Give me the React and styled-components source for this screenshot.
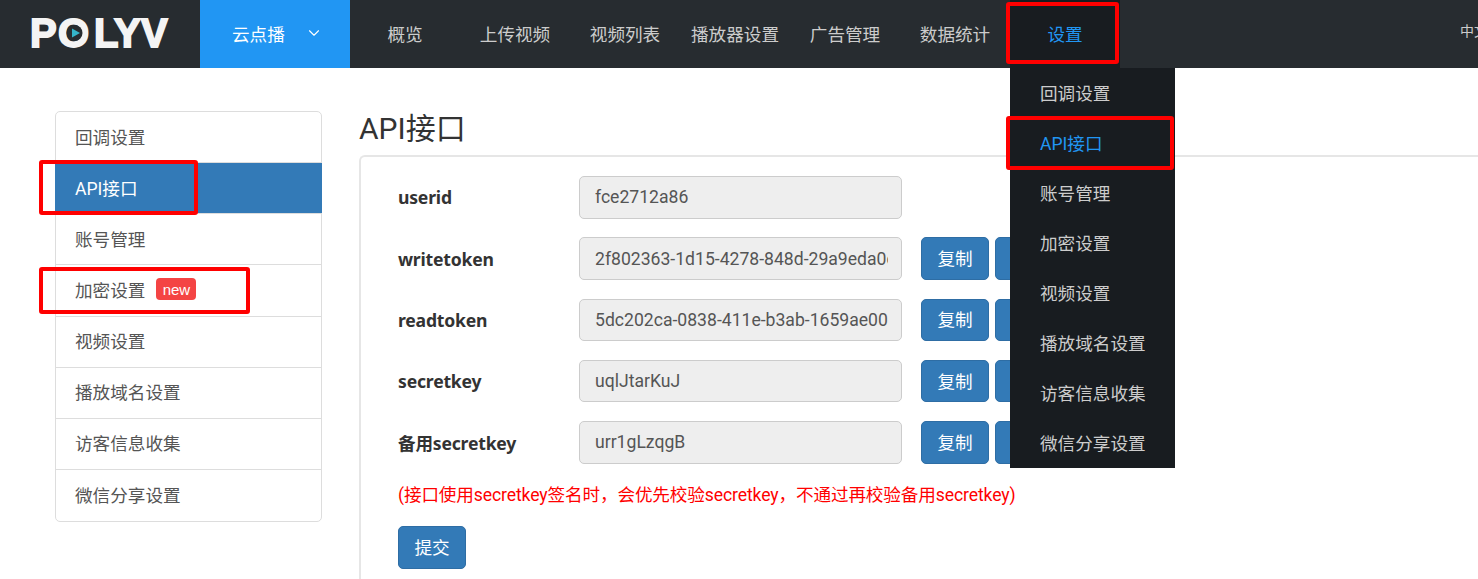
import React from 'react';
import styled, { createGlobalStyle } from 'styled-components';
import { ChevronDown } from 'lucide-react';

const FONT = `Roboto, "Noto Sans CJK SC", sans-serif`;

const GlobalStyle = createGlobalStyle`
    html, body {
        margin: 0;
        width: 1478px;
        height: 579px;
        overflow: hidden;
        background: #ffffff;
        font-family: ${FONT};
    }
    * {
        box-sizing: border-box;
    }
`
const Page = styled.div`
    position: relative;
    width: 1478px;
    height: 579px;
    overflow: hidden;
`
const Header = styled.header`
    display: flex;
    height: 68px;
    background: #272c30;
`
const LogoBox = styled.div`
    flex: none;
    display: flex;
    align-items: center;
    justify-content: center;
    width: 200px;
`
const ProductTab = styled.div`
    flex: none;
    display: flex;
    align-items: center;
    justify-content: space-between;
    width: 150px;
    padding: 0 27px 2px 32px;
    background: #2196f3;
    color: #ffffff;
    font-size: 17.6px;
`
const Nav = styled.nav`
    flex: none;
    display: flex;
`
const NavItem = styled.div`
    position: relative;
    display: flex;
    align-items: center;
    justify-content: center;
    width: 110px;
    padding-bottom: 2px;
    font-size: 17.6px;
    white-space: nowrap;
    color: ${p => (p.$active ? '#2196f3' : '#cccccc')};
    background: ${p => (p.$active ? '#181c20' : 'transparent')};
`
const Lang = styled.div`
    flex: none;
    margin: 20px 0 0 340px;
    font-size: 14px;
    line-height: 22px;
    color: #cccccc;
    white-space: nowrap;
`
const Dropdown = styled.ul`
    position: absolute;
    top: 68px;
    left: 0;
    z-index: 5;
    width: 165px;
    margin: 0;
    padding: 0;
    list-style: none;
    background: #181c20;
`
const DropdownItem = styled.li`
    display: flex;
    align-items: center;
    height: 50px;
    padding: 0 0 2px 30px;
    font-size: 17.6px;
    color: ${p => (p.$active ? '#2196f3' : '#cccccc')};
`
const Body = styled.div`
    display: flex;
    align-items: flex-start;
    padding: 43px 0 0 55px;
`
const SideMenu = styled.ul`
    flex: none;
    width: 267px;
    margin: 0 37px 0 0;
    padding: 0;
    list-style: none;
    border: 1px solid #dddddd;
    border-radius: 5px;
`
const SideItem = styled.li`
    display: flex;
    align-items: center;
    gap: 11px;
    height: 51.125px;
    margin: 0 ${p => (p.$active ? '-1px' : '0')};
    padding: 0 0 2px ${p => (p.$active ? '20px' : '19px')};
    font-size: 17.6px;
    color: ${p => (p.$active ? '#ffffff' : '#555555')};
    background: ${p => (p.$active ? '#337ab7' : 'transparent')};
    border-bottom: 1px solid #dddddd;
    &:last-child {
        border-bottom: 0;
    }
`
const NewBadge = styled.span`
    display: inline-flex;
    align-items: center;
    justify-content: center;
    width: 40px;
    height: 22px;
    border-radius: 4px;
    background: #f44444;
    color: #ffffff;
    font-family: "Liberation Sans", sans-serif;
    font-size: 15px;
`
const Main = styled.main`
    flex: 1;
    min-width: 0;
`
const Title = styled.h1`
    margin: 0;
    height: 44px;
    font-size: 30px;
    line-height: 36px;
    font-weight: 400;
    color: #333333;
`
const Panel = styled.section`
    height: 440px;
    padding: 19px 0 0 37px;
    border: solid #e6e6e6;
    border-width: 2px 0 0 2px;
    border-top-left-radius: 6px;
`
const Row = styled.div`
    display: flex;
    align-items: center;
    height: 42.5px;
    margin-bottom: 18.75px;
`
const Label = styled.label`
    flex: none;
    width: 181px;
    font-family: "Noto Sans", "Noto Sans CJK SC", sans-serif;
    font-size: 17.6px;
    font-weight: 700;
    letter-spacing: -0.2px;
    color: #333333;
`
const TokenInput = styled.input`
    flex: none;
    width: 323px;
    height: 100%;
    padding: 0 13px 0 15px;
    border: 1px solid #cccccc;
    border-radius: 5px;
    background: #eeeeee;
    font-family: ${FONT};
    font-size: 17.6px;
    color: #555555;
    outline: none;
`
const Button = styled.button`
    flex: none;
    width: 68px;
    height: ${p => p.$height || '100%'};
    margin-left: ${p => p.$gap || '0'};
    padding: 0 0 2px;
    border: 1px solid #2e6da4;
    border-radius: 5px;
    background: #337ab7;
    color: #ffffff;
    font-family: ${FONT};
    font-size: 17.6px;
`
const Note = styled.p`
    margin: 0 0 18px;
    font-size: 17.6px;
    line-height: 26px;
    letter-spacing: -0.12px;
    color: #ff0000;
    white-space: nowrap;
`
const Mark = styled.div`
    position: absolute;
    z-index: 6;
    border: 4px solid #ff0000;
    border-radius: 3px;
    pointer-events: none;
    left: ${p => p.$x}px;
    top: ${p => p.$y}px;
    width: ${p => p.$w}px;
    height: ${p => p.$h}px;
`

const navItems = ['概览', '上传视频', '视频列表', '播放器设置', '广告管理', '数据统计'];
const dropItems = ['回调设置', 'API接口', '账号管理', '加密设置', '视频设置', '播放域名设置', '访客信息收集', '微信分享设置'];
const tokens = [
    { label: 'userid', value: 'fce2712a86', plain: true },
    { label: 'writetoken', value: '2f802363-1d15-4278-848d-29a9eda0c1f7' },
    { label: 'readtoken', value: '5dc202ca-0838-411e-b3ab-1659ae0071c2' },
    { label: 'secretkey', value: 'uqlJtarKuJ' },
    { label: '备用secretkey', value: 'urr1gLzqgB' },
];

const Logo = () => (
    <svg width="140" height="32" viewBox="0 0 140 32" overflow="visible">
        <text x="0 28 64 84 111" y="29" fontFamily="Liberation Sans" fontWeight="700" fontSize="40"
            fill="#f4f4f4" stroke="#f4f4f4" strokeWidth="1.8">POLYV</text>
        <circle cx="44.5" cy="15" r="8" fill="#272c30" />
        <path d="M42 10.5 L50 15 L42 19.5 Z" fill="#35b5c9" />
    </svg>
)

const App = () => {
    return (
        <Page>
            <GlobalStyle />
            <Header>
                <LogoBox><Logo /></LogoBox>
                <ProductTab>
                    云点播
                    <ChevronDown size={18} strokeWidth={1.5} />
                </ProductTab>
                <Nav>
                    {navItems.map(item => <NavItem key={item}>{item}</NavItem>)}
                    <NavItem $active>
                        设置
                        <Dropdown>
                            {dropItems.map(item => (
                                <DropdownItem key={item} $active={item === 'API接口'}>{item}</DropdownItem>
                            ))}
                        </Dropdown>
                    </NavItem>
                </Nav>
                <Lang>中文</Lang>
            </Header>
            <Body>
                <SideMenu>
                    {dropItems.map(item => (
                        <SideItem key={item} $active={item === 'API接口'}>
                            {item}
                            {item === '加密设置' && <NewBadge>new</NewBadge>}
                        </SideItem>
                    ))}
                </SideMenu>
                <Main>
                    <Title>API接口</Title>
                    <Panel>
                        {tokens.map(token => (
                            <Row key={token.label}>
                                <Label>{token.label}</Label>
                                <TokenInput readOnly disabled value={token.value} />
                                {!token.plain && <Button $gap="19px">复制</Button>}
                                {!token.plain && <Button $gap="6px" />}
                            </Row>
                        ))}
                        <Note>(接口使用secretkey签名时，会优先校验secretkey，不通过再校验备用secretkey)</Note>
                        <Button $height="43px">提交</Button>
                    </Panel>
                </Main>
            </Body>
            <Mark $x={1006} $y={2} $w={113} $h={62} />
            <Mark $x={1006} $y={116} $w={168} $h={54} />
            <Mark $x={39} $y={160} $w={159} $h={55} />
            <Mark $x={39} $y={267} $w={211} $h={47} />
        </Page>
    )
}

export default App
